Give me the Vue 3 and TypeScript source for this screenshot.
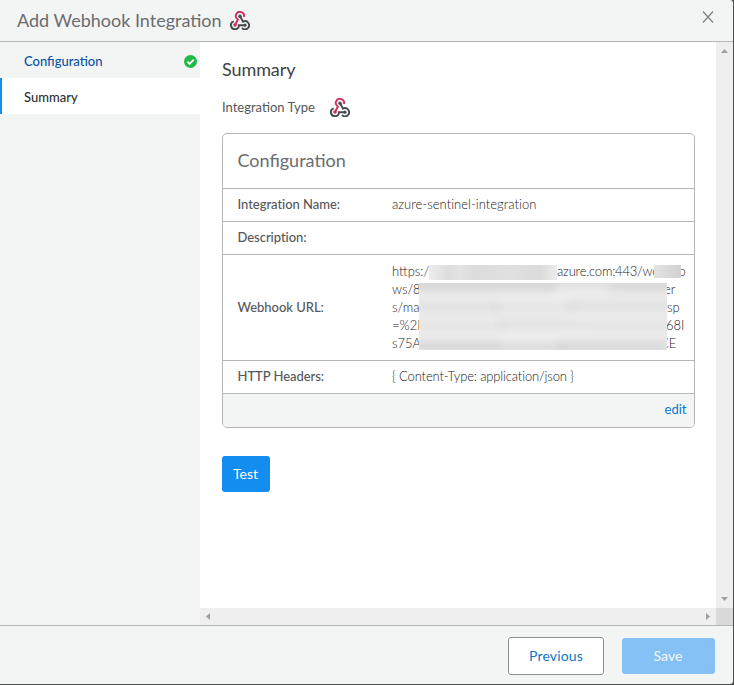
<script setup lang="ts">
interface Blob { x: number; y: number; w: number; o: number }

const mask: Blob[] = [
  { x: -6, y: -3, w: 140, o: 0.13 },
  { x: 130, y: -5, w: 60, o: 0.08 },
  { x: 190, y: -3, w: 70, o: 0.12 },
  { x: -5, y: 18, w: 85, o: 0.07 },
  { x: 75, y: 19, w: 80, o: 0.05 },
  { x: 150, y: 17, w: 105, o: 0.07 },
  { x: -5, y: 37, w: 90, o: 0.05 },
  { x: 80, y: 36, w: 80, o: 0.06 },
  { x: 160, y: 37, w: 95, o: 0.05 },
  { x: -5, y: 58, w: 85, o: 0.12 },
  { x: 78, y: 59, w: 65, o: 0.09 },
  { x: 140, y: 58, w: 110, o: 0.11 },
]

const urlLines: { start: string; end: string; lead: number }[] = [
  { start: 'ws/8', end: 'er', lead: 272 },
  { start: 's/ma', end: 'sp', lead: 275 },
  { start: '=%2F', end: '68I', lead: 274 },
  { start: 's75A', end: 'CE', lead: 268 },
]
</script>

<template>
  <div class="dialog">
    <svg width="0" height="0" class="defs">
      <symbol id="hook" viewBox="0 0 20 19">
        <g fill="none" stroke-width="1.9">
          <path d="M13.9 6A4.1 4.1 0 1 0 7.9 8.5L5 14" stroke="#d0305f" />
          <path d="M3.7 10.4A4 4 0 1 0 8.9 14.2H15" stroke="#444a4d" />
          <path d="M10 5 13 10.8A4 4 0 1 1 12 16.9" stroke="#444a4d" />
        </g>
        <circle cx="10" cy="5.2" r="1.7" fill="#444a4d" />
        <circle cx="5" cy="14" r="1.8" fill="#d0305f" />
        <circle cx="15" cy="14.2" r="1.6" fill="#444a4d" />
      </symbol>
    </svg>
    <header class="head">
      <h1>Add Webhook Integration</h1>
      <svg class="hook"><use href="#hook" /></svg>
      <svg class="close" viewBox="0 0 12 12"><path d="M1 .5 11 11.5M11 .5 1 11.5" /></svg>
    </header>
    <div class="body">
      <nav class="side">
        <div class="step done">
          <span>Configuration</span>
          <svg viewBox="0 0 13 13"><circle cx="6.5" cy="6.5" r="6.5" fill="#21b845" /><path d="m3.4 6.7 2.2 2.2 4.1-4.3" fill="none" stroke="#fff" stroke-width="1.8" /></svg>
        </div>
        <div class="step active"><span>Summary</span></div>
      </nav>
      <div class="pane">
        <div class="upper">
          <main class="content">
            <h2>Summary</h2>
            <div class="type"><span>Integration Type</span><svg class="hook"><use href="#hook" /></svg></div>
            <section class="card">
              <h3>Configuration</h3>
              <div class="row"><b>Integration Name:</b><span class="name">azure-sentinel-integration</span></div>
              <div class="row"><b>Description:</b></div>
              <div class="row url">
                <b>Webhook URL:</b>
                <div class="value">
                  <div class="line"><span class="first">https:/</span><span class="host">azure.com:443/wo</span><span>o</span></div>
                  <div v-for="l in urlLines" :key="l.start" class="line"><span :style="{ width: l.lead + 'px' }">{{ l.start }}</span><span>{{ l.end }}</span></div>
                  <i class="mask m1"></i>
                  <i class="mask m2"></i>
                  <i class="mask m3">
                    <i v-for="(b, n) in mask" :key="n" class="blob" :style="{ left: b.x + 'px', top: b.y + 'px', width: b.w + 'px', opacity: b.o }"></i>
                  </i>
                </div>
              </div>
              <div class="row"><b>HTTP Headers:</b><span class="headers">{ Content-Type: application/json }</span></div>
              <div class="edit"><a>edit</a></div>
            </section>
            <button class="test">Test</button>
          </main>
          <div class="vbar">
            <svg viewBox="0 0 7 4"><path d="M0 4 3.5 0 7 4z" /></svg>
            <svg viewBox="0 0 7 4"><path d="M0 0 3.5 4 7 0z" /></svg>
          </div>
        </div>
        <div class="lower">
          <div class="hbar">
            <svg viewBox="0 0 4 7"><path d="M4 0 0 3.5 4 7z" /></svg>
            <svg viewBox="0 0 4 7"><path d="M0 0 4 3.5 0 7z" /></svg>
          </div>
          <div class="corner"></div>
        </div>
      </div>
    </div>
    <footer class="foot">
      <button class="prev">Previous</button>
      <button class="save">Save</button>
    </footer>
  </div>
</template>

<style>
body { margin: 0; background: #4a4c4f; }
</style>
<style scoped>
* { box-sizing: border-box; }
.defs { position: absolute; }
.dialog { width: 733px; height: 684px; background: #f3f5f5; border-radius: 0 3px 3px 0; overflow: hidden; display: flex; flex-direction: column; font-family: Lato, "Liberation Sans", sans-serif; font-size: 13px; color: #555759; }
h1, h2, h3 { margin: 0; font-weight: 400; }
.head { height: 42px; flex: none; border-bottom: 1px solid #b4b7b8; display: flex; align-items: center; padding: 0 19px 0 17px; }
h1 { font-size: 18px; line-height: 38px; padding-bottom: 2px; color: #6a6c6e; white-space: nowrap; width: 213px; }
.hook { width: 20px; height: 19px; flex: none; }
.close { width: 12px; height: 12px; margin-left: auto; margin-bottom: 8px; fill: none; stroke: #7d8082; stroke-width: 1.2; }
.body { flex: 1; min-height: 0; display: flex; }
.side { width: 200px; }
.step { height: 36px; display: flex; align-items: center; justify-content: space-between; padding: 2px 3px 0 24px; line-height: 18px; font-weight: 500; }
.done { color: #0953a0; }
.step svg { width: 13px; height: 13px; }
.active { background: #fff; border-left: 2px solid #168ff5; padding-left: 22px; color: #2e3032; }
.pane { width: 533px; display: flex; flex-direction: column; background: #fff; }
.upper { height: 566px; display: flex; }
.content { width: 516px; padding: 15px 21px 0 22px; }
h2 { font-size: 18px; line-height: 24px; letter-spacing: -0.1px; color: #404244; }
.type { display: flex; align-items: center; height: 20px; margin-top: 16px; gap: 15px; }
.type span { white-space: nowrap; }
.card { margin-top: 16px; border: 1px solid #b4b6b8; border-radius: 5px; overflow: hidden; }
h3 { height: 54px; line-height: 52px; padding-left: 14.5px; font-size: 18px; color: #6a6c6e; }
.row { border-top: 1px solid #b4b6b8; height: 33px; display: flex; align-items: center; padding: 0 0 2px 15px; font-weight: 300; color: #1e2022; }
.row b { width: 154px; margin-left: -0.5px; margin-right: 0.5px; font-weight: 500; letter-spacing: -0.04px; color: #55575a; }
.name { letter-spacing: 0.03px; }
.headers { letter-spacing: -0.15px; }
.url { height: 106px; }
.value { position: relative; width: 300px; }
.line { height: 18px; line-height: 18px; display: flex; white-space: nowrap; }
.first { width: 165px; }
.host { width: 121.5px; letter-spacing: -0.2px; }
.mask { position: absolute; overflow: hidden; }
.m1 { left: 37px; top: 3px; width: 128px; height: 15px; background: linear-gradient(90deg, #ededed, #dddddd 15%, #e3e3e3 24%, #dcdcdc 36%, #e0e0e0 65%, #dbdbdb 87%, #ececec); }
.m2 { left: 262px; top: 3px; width: 27px; height: 13px; background: linear-gradient(90deg, #e2e2e2, #d2d2d2); }
.m3 { left: 27px; top: 21px; width: 248px; height: 67px; background: #efefef; }
.blob { position: absolute; height: 11px; background: #222; filter: blur(5px); }
.edit { height: 34px; border-top: 1px solid #b4b6b8; background: #f3f5f5; text-align: right; padding-right: 7.5px; line-height: 31px; color: #0b77ca; }
button { font: 14px Lato, sans-serif; border: 0; border-radius: 3px; padding: 0; }
.test { display: block; margin-top: 28px; width: 48px; height: 36px; padding: 0 1px 2px 0; background: #148df1; color: #fff; }
.vbar { width: 17px; background: #efefef; display: flex; flex-direction: column; justify-content: space-between; align-items: center; padding: 7px 0; }
.vbar svg { width: 7px; height: 4px; fill: #a0a0a0; }
.lower { height: 17px; display: flex; }
.hbar { width: 516px; background: #efefef; display: flex; justify-content: space-between; align-items: center; padding: 0 6px; }
.hbar svg { width: 4px; height: 7px; fill: #a0a0a0; }
.corner { width: 17px; background: #dadada; }
.foot { height: 59px; flex: none; border-top: 1px solid #b4b7b8; display: flex; justify-content: flex-end; align-items: center; gap: 18px; padding: 1px 18px 0 0; }
.prev { width: 96px; height: 38px; letter-spacing: 0.15px; border: 1px solid #8d8f91; background: #fff; color: #0b77ca; }
.save { width: 93px; height: 36px; padding-right: 1px; letter-spacing: 0.1px; background: #85c1f4; color: #f3f8fc; }
</style>
